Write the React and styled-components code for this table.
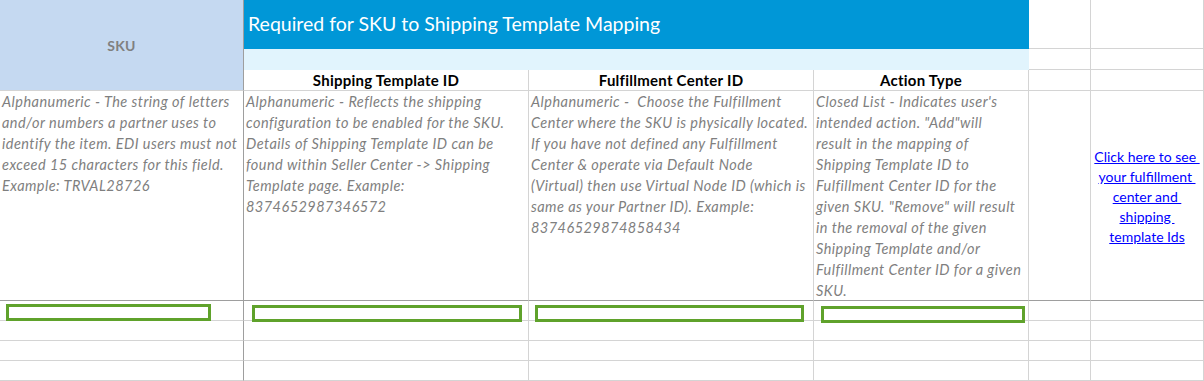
import React from 'react'
import styled, { createGlobalStyle } from 'styled-components'

const GlobalStyle = createGlobalStyle`
  html, body {
    margin: 0;
    padding: 0;
    background: #ffffff;
  }
  body {
    font-family: Lato, "Liberation Sans", sans-serif;
  }
`

const LIGHT = '#d4d4d4'
const DARK = '#9e9e9e'

const descriptions = [
  [
    'Alphanumeric - The string of letters',
    'and/or numbers a partner uses to',
    'identify the item. EDI users must not',
    'exceed 15 characters for this field.',
    'Example: TRVAL28726',
  ],
  [
    'Alphanumeric - Reflects the shipping',
    'configuration to be enabled for the SKU.',
    'Details of Shipping Template ID can be',
    'found within Seller Center -> Shipping',
    'Template page. Example:',
    '8374652987346572',
  ],
  [
    'Alphanumeric -  Choose the Fulfillment',
    'Center where the SKU is physically located.',
    'If you have not defined any Fulfillment',
    'Center & operate via Default Node',
    '(Virtual) then use Virtual Node ID (which is',
    'same as your Partner ID). Example:',
    '83746529874858434',
  ],
  [
    "Closed List - Indicates user's",
    'intended action. "Add"will',
    'result in the mapping of',
    'Shipping Template ID to',
    'Fulfillment Center ID for the',
    'given SKU. "Remove" will result',
    'in the removal of the given',
    'Shipping Template and/or',
    'Fulfillment Center ID for a given',
    'SKU.',
  ],
]

const linkLines = [
  'Click here to see\u00a0',
  'your fulfillment\u00a0',
  'center and\u00a0',
  'shipping\u00a0',
  'template Ids',
]

// green input outlines sitting on the first data row
const inputBoxes = [
  { left: 6, top: 3, width: 205 },
  { left: 8, top: 4, width: 270 },
  { left: 6, top: 4, width: 269 },
  { left: 7, top: 5, width: 204 },
]

const Sheet = styled.div`
  display: grid;
  grid-template-columns: 244px 285px 285px 215px 62px 113px;
  grid-template-rows: 49px 21px 21px 210px repeat(4, 20px);
  width: 1204px;
`

const Cell = styled.div`
  box-sizing: border-box;
  min-width: 0;
  border-right: 1px solid ${p => (p.$first ? DARK : LIGHT)};
  border-bottom: 1px solid ${p => (p.$heavyBottom ? DARK : LIGHT)};
`

const SkuHeader = styled(Cell)`
  grid-row: span 3;
  background: #c5d9f1;
  display: flex;
  align-items: center;
  justify-content: center;
  color: #808080;
  font-weight: 700;
  font-size: 14px;
  letter-spacing: 0.3px;
`

const TitleBar = styled.div`
  grid-column: span 3;
  background: #0097d7;
  color: #ffffff;
  font-size: 19.5px;
  display: flex;
  align-items: center;
  padding: 0 0 2px 4px;
  box-sizing: border-box;
  white-space: nowrap;
`

const SubBand = styled.div`
  grid-column: span 3;
  background: #e1f4fd;
`

const ColumnHeader = styled(Cell)`
  display: flex;
  align-items: center;
  justify-content: center;
  font-weight: 700;
  font-size: 15px;
  letter-spacing: 0.25px;
  color: #000000;
  white-space: nowrap;
`

const DescCell = styled(Cell)`
  padding: 0 0 0 2px;
  font-style: italic;
  font-size: 14.5px;
  letter-spacing: 0.45px;
  line-height: 21px;
  color: #7f7f7f;
  white-space: pre;
  overflow: hidden;
`

const Line = styled.div``

const LinkCell = styled(Cell)`
  display: flex;
  flex-direction: column;
  align-items: center;
  justify-content: center;
  padding-top: 2px;
`

const SheetLink = styled.a`
  color: #0000ff;
  text-decoration: underline;
  font-size: 14px;
  line-height: 20px;
  white-space: nowrap;
`

const InputCell = styled(Cell)`
  overflow: visible;
`

const InputBox = styled.div`
  position: relative;
  z-index: 1;
  box-sizing: border-box;
  height: 17px;
  border: 3px solid #5fa22b;
`

export default function App() {
  return (
    <>
      <GlobalStyle />
      <Sheet>
        <SkuHeader $first>SKU</SkuHeader>
        <TitleBar>Required for SKU to Shipping Template Mapping</TitleBar>
        <Cell />
        <Cell />

        <SubBand />
        <Cell />
        <Cell />

        <ColumnHeader>Shipping Template ID</ColumnHeader>
        <ColumnHeader>Fulfillment Center ID</ColumnHeader>
        <ColumnHeader>Action Type</ColumnHeader>
        <Cell />
        <Cell />

        {descriptions.map((lines, i) => (
          <DescCell key={i} $first={i === 0} $heavyBottom>
            {lines.map((l, j) => (
              <Line key={j}>{l}</Line>
            ))}
          </DescCell>
        ))}
        <Cell $heavyBottom />
        <LinkCell $heavyBottom>
          {linkLines.map((l, j) => (
            <SheetLink key={j} href="#">
              {l}
            </SheetLink>
          ))}
        </LinkCell>

        {inputBoxes.map((b, i) => (
          <InputCell key={i} $first={i === 0}>
            <InputBox style={{ marginLeft: b.left, marginTop: b.top, width: b.width }} />
          </InputCell>
        ))}
        <Cell />
        <Cell />

        {[0, 1, 2].map(r => (
          <React.Fragment key={r}>
            <Cell $first />
            <Cell />
            <Cell />
            <Cell />
            <Cell />
            <Cell />
          </React.Fragment>
        ))}
      </Sheet>
    </>
  )
}
